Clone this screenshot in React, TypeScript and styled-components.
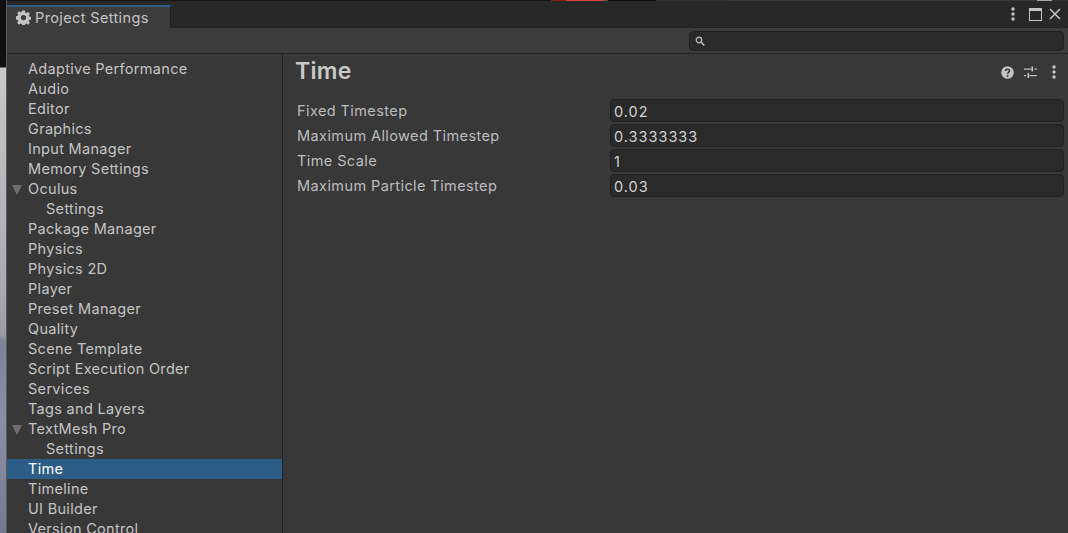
import React from 'react';
import styled, { createGlobalStyle } from 'styled-components';

const GlobalStyle = createGlobalStyle`
  html, body {
    margin: 0;
    padding: 0;
    width: 1068px;
    height: 533px;
    overflow: hidden;
    background: #101010;
  }
  * { box-sizing: border-box; }
`;

const Desktop = styled.div`
  width: 1068px;
  height: 533px;
  display: flex;
  overflow: hidden;
  font-family: Inter, "Noto Sans", sans-serif;
  background: #101010;
`;

const Backdrop = styled.div`
  width: 7px;
  flex: none;
  border-right: 1px solid #5a5a5e;
  background: linear-gradient(
    to bottom,
    #101010 0,
    #101010 67px,
    #c9c9c7 68px,
    #b4b6ba 200px,
    #a9abb2 285px,
    #9a9ca4 335px,
    #7f8397 341px,
    #8c8fa3 420px,
    #777a8e 533px
  );
`;

const Window = styled.div`
  flex: 1;
  min-width: 0;
  display: flex;
  flex-direction: column;
`;

const TopStrip = styled.div`
  height: 1px;
  flex: none;
  display: flex;
  background: #161616;
`;

const StripPart = styled.span<{ $width: number; $color: string }>`
  width: ${(p) => p.$width}px;
  flex: none;
  background: ${(p) => p.$color};
`;

const TabBar = styled.div`
  height: 27px;
  flex: none;
  display: flex;
  align-items: flex-end;
  justify-content: space-between;
  background: #282828;
  border-bottom: 1px solid #232323;
`;

const Tab = styled.div`
  width: 164px;
  height: 23px;
  display: flex;
  align-items: center;
  gap: 4px;
  padding-left: 9px;
  margin-bottom: -1px;
  background: #3c3c3c;
  border-top: 2px solid #2c5d87;
  border-right: 1px solid #1f1f1f;
  color: #c4c4c4;
  font-size: 14.5px;
  letter-spacing: 0.37px;
`;

const WindowControls = styled.div`
  display: flex;
  align-items: center;
  padding-right: 7px;
  height: 22px;
  margin-bottom: 2px;
  color: #c4c4c4;
`;

const ControlSlot = styled.span<{ $gap: number }>`
  display: flex;
  margin-right: ${(p) => p.$gap}px;
`;

const SearchBar = styled.div`
  height: 26px;
  flex: none;
  display: flex;
  align-items: center;
  justify-content: flex-end;
  padding-right: 4px;
  background: #3c3c3c;
  border-bottom: 1px solid #232323;
`;

const SearchField = styled.div`
  width: 375px;
  height: 20px;
  display: flex;
  align-items: center;
  padding-left: 5px;
  background: #2a2a2a;
  border: 1px solid #212121;
  border-radius: 4px;
  color: #b0b0b0;
`;

const Body = styled.div`
  flex: 1;
  min-height: 0;
  display: flex;
  background: #383838;
`;

const Sidebar = styled.div`
  width: 276px;
  flex: none;
  padding-top: 5px;
  border-right: 1px solid #232323;
  overflow: hidden;
`;

const TreeRow = styled.div<{ $depth?: number; $selected?: boolean }>`
  position: relative;
  height: 20px;
  width: 275px;
  line-height: 20px;
  padding-left: ${(p) => 21 + (p.$depth ?? 0) * 18}px;
  font-size: 14.5px;
  letter-spacing: 0.31px;
  white-space: nowrap;
  color: ${(p) => (p.$selected ? '#ffffff' : '#c4c4c4')};
  background: ${(p) => (p.$selected ? '#2c5d87' : 'transparent')};
`;

const Caret = styled.span`
  position: absolute;
  left: 5px;
  top: 6px;
  width: 0;
  height: 0;
  border-left: 5px solid transparent;
  border-right: 5px solid transparent;
  border-top: 10px solid #6e6e6e;
`;

const Content = styled.div`
  flex: 1;
  min-width: 0;
  padding: 0 4px 0 12px;
`;

const Header = styled.div`
  height: 34px;
  display: flex;
  align-items: center;
  justify-content: space-between;
`;

const Title = styled.h1`
  margin: 0;
  font-size: 23px;
  font-weight: 600;
  letter-spacing: 0.3px;
  color: #c9c9c9;
`;

const HeaderIcons = styled.div`
  display: flex;
  align-items: center;
  padding: 2px 8px 0 0;
  color: #c4c4c4;
`;

const Fields = styled.div`
  margin-top: 11px;
  display: flex;
  flex-direction: column;
  gap: 2px;
`;

const FieldRow = styled.div`
  height: 23px;
  display: grid;
  grid-template-columns: 315px 1fr;
  align-items: center;
`;

const FieldLabel = styled.label`
  padding-left: 2px;
  font-size: 14.5px;
  letter-spacing: 0.41px;
  color: #bdbdbd;
`;

const FieldValue = styled.div`
  height: 23px;
  line-height: 23px;
  padding-left: 3px;
  background: #2a2a2a;
  border: 1px solid #212121;
  border-radius: 4px;
  font-size: 14.5px;
  letter-spacing: 1px;
  color: #d2d2d2;
`;

const Dots = () => (
  <svg width="4" height="14" viewBox="0 0 4 14" fill="currentColor">
    <circle cx="2" cy="2" r="1.7" />
    <circle cx="2" cy="7" r="1.7" />
    <circle cx="2" cy="12" r="1.7" />
  </svg>
);

const MaximizeIcon = () => (
  <svg width="13" height="13" viewBox="0 0 13 13" fill="none" stroke="currentColor">
    <rect x="0.5" y="0.5" width="12" height="12" />
    <rect x="0.5" y="0.5" width="12" height="2.5" fill="currentColor" stroke="none" />
  </svg>
);

const CloseIcon = () => (
  <svg width="12" height="12" viewBox="0 0 12 12" fill="none" stroke="currentColor" strokeWidth="1.5">
    <path d="M1 1l10 10M11 1L1 11" />
  </svg>
);

const GearIcon = () => (
  <svg width="15" height="15" viewBox="0 0 16 16" fill="#c4c4c4">
    <path
      fillRule="evenodd"
      d="M6.6 0.6h2.8l.4 2.1 1.2.5 1.8-1.2 2 2-1.2 1.8.5 1.2 2.1.4v2.8l-2.1.4-.5 1.2 1.2 1.8-2 2-1.8-1.2-1.2.5-.4 2.1H6.6l-.4-2.1-1.2-.5-1.8 1.2-2-2 1.2-1.8-.5-1.2-2.1-.4V6.6l2.1-.4.5-1.2L1.2 3.2l2-2L5 2.4l1.2-.5zM8 5.2a2.8 2.8 0 100 5.6 2.8 2.8 0 000-5.6z"
    />
  </svg>
);

const SearchIcon = () => (
  <svg width="10" height="10" viewBox="0 0 10 10" fill="none" stroke="currentColor">
    <circle cx="4" cy="4" r="2.7" strokeWidth="1.4" />
    <path d="M6 6l3.3 3.3" strokeWidth="1.7" />
  </svg>
);

const HelpIcon = () => (
  <svg width="13" height="13" viewBox="0 0 13 13">
    <circle cx="6.5" cy="6.5" r="6.3" fill="#c4c4c4" />
    <path
      d="M4.5 5.1c0-1.2.9-1.8 2-1.8s2 .6 2 1.7c0 1.5-1.9 1.4-1.9 2.8"
      fill="none"
      stroke="#383838"
      strokeWidth="1.6"
    />
    <rect x="5.7" y="9" width="1.7" height="1.7" fill="#383838" />
  </svg>
);

const PresetIcon = () => (
  <svg width="13" height="13" viewBox="0 0 13 13" fill="#c4c4c4">
    <rect x="0" y="2.5" width="7.5" height="1.2" />
    <rect x="7.5" y="0.5" width="1.6" height="5" />
    <rect x="10.5" y="2.5" width="2.5" height="1.2" />
    <rect x="0" y="9" width="2" height="1.2" />
    <rect x="3.5" y="7" width="1.6" height="5" />
    <rect x="5.5" y="9" width="7.5" height="1.2" />
  </svg>
);

const stripParts = [
  { width: 544, color: '#141414' },
  { width: 15, color: '#8a1c1c' },
  { width: 38, color: '#d8453f' },
  { width: 4, color: '#55504f' },
  { width: 48, color: '#0d0d0d' },
  { width: 72, color: '#2f2f2f' },
  { width: 309, color: '#383838' },
  { width: 15, color: '#a8a8a8' },
  { width: 16, color: '#333333' },
];

type TreeItem = { label: string; depth?: number; caret?: boolean; selected?: boolean };

const treeItems: TreeItem[] = [
  { label: 'Adaptive Performance' },
  { label: 'Audio' },
  { label: 'Editor' },
  { label: 'Graphics' },
  { label: 'Input Manager' },
  { label: 'Memory Settings' },
  { label: 'Oculus', caret: true },
  { label: 'Settings', depth: 1 },
  { label: 'Package Manager' },
  { label: 'Physics' },
  { label: 'Physics 2D' },
  { label: 'Player' },
  { label: 'Preset Manager' },
  { label: 'Quality' },
  { label: 'Scene Template' },
  { label: 'Script Execution Order' },
  { label: 'Services' },
  { label: 'Tags and Layers' },
  { label: 'TextMesh Pro', caret: true },
  { label: 'Settings', depth: 1 },
  { label: 'Time', selected: true },
  { label: 'Timeline' },
  { label: 'UI Builder' },
  { label: 'Version Control' },
];

const fields = [
  { label: 'Fixed Timestep', value: '0.02' },
  { label: 'Maximum Allowed Timestep', value: '0.3333333' },
  { label: 'Time Scale', value: '1' },
  { label: 'Maximum Particle Timestep', value: '0.03' },
];

export default function App() {
  return (
    <Desktop>
      <GlobalStyle />
      <Backdrop />
      <Window>
        <TopStrip>
          {stripParts.map((part, i) => (
            <StripPart key={i} $width={part.width} $color={part.color} />
          ))}
        </TopStrip>
        <TabBar>
          <Tab>
            <GearIcon />
            Project Settings
          </Tab>
          <WindowControls>
            <ControlSlot $gap={14}>
              <Dots />
            </ControlSlot>
            <ControlSlot $gap={7}>
              <MaximizeIcon />
            </ControlSlot>
            <CloseIcon />
          </WindowControls>
        </TabBar>
        <SearchBar>
          <SearchField>
            <SearchIcon />
          </SearchField>
        </SearchBar>
        <Body>
          <Sidebar>
            {treeItems.map((item, i) => (
              <TreeRow key={i} $depth={item.depth} $selected={item.selected}>
                {item.caret && <Caret />}
                {item.label}
              </TreeRow>
            ))}
          </Sidebar>
          <Content>
            <Header>
              <Title>Time</Title>
              <HeaderIcons>
                <ControlSlot $gap={10}>
                  <HelpIcon />
                </ControlSlot>
                <ControlSlot $gap={15}>
                  <PresetIcon />
                </ControlSlot>
                <Dots />
              </HeaderIcons>
            </Header>
            <Fields>
              {fields.map((f) => (
                <FieldRow key={f.label}>
                  <FieldLabel>{f.label}</FieldLabel>
                  <FieldValue>{f.value}</FieldValue>
                </FieldRow>
              ))}
            </Fields>
          </Content>
        </Body>
      </Window>
    </Desktop>
  );
}
